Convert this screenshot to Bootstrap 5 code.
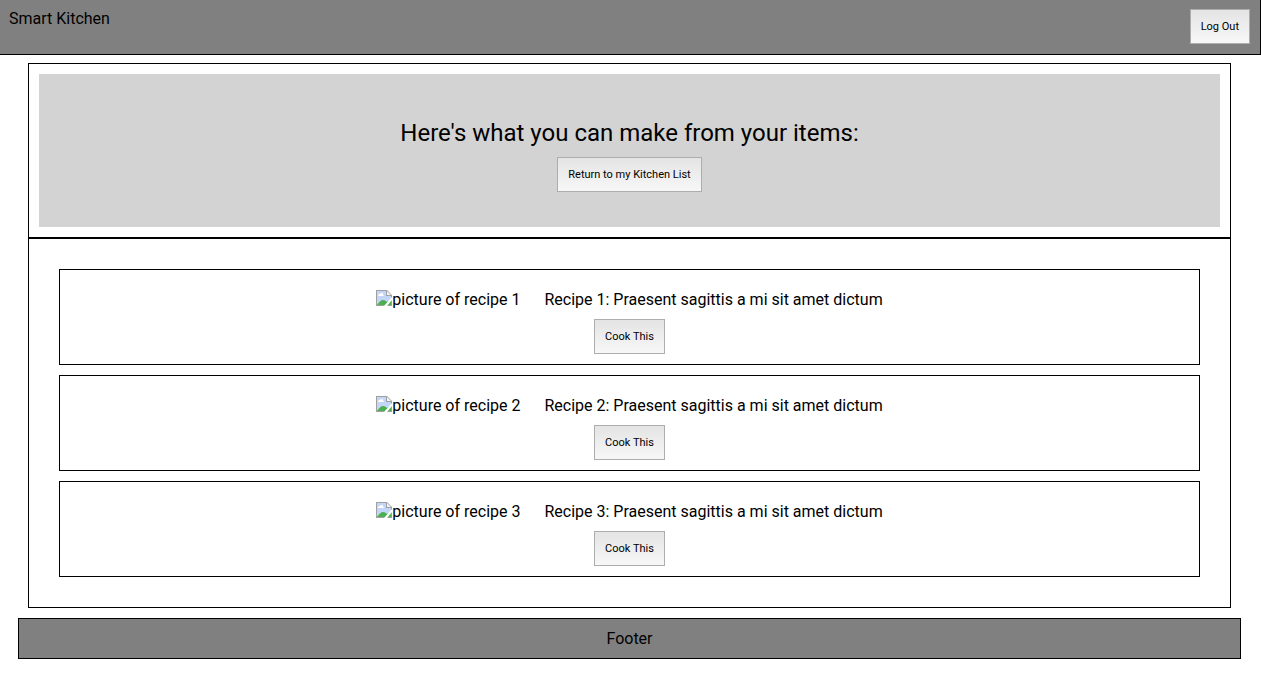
<!DOCTYPE html>
<html lang="en">
<head>
<meta charset="utf-8">
<meta name="viewport" content="width=device-width, initial-scale=1">
<title>Smart Kitchen</title>
<link href="https://cdn.jsdelivr.net/npm/bootstrap@5.3.0/dist/css/bootstrap.min.css" rel="stylesheet">
<style>
  body { font-family: Roboto, sans-serif; font-size: 16px; line-height: 19px; color: #000; background: #fff; }
  .site-header { background: #808080; border: solid #000; border-width: 0 1px 1px 0; padding: 9px 10px 10px 9px; }
  .kitchen-btn { font-size: 11px; line-height: 13px; padding: 10px; color: #000; border: 1px solid #adadad; border-radius: 0; background: linear-gradient(#e4e4e4, #f7f7f7); }
  .kitchen-btn:hover { color: #000; border-color: #777; }
  main { margin: 8px 30px 10px 28px; }
  .panel { border: 1px solid #000; }
  .intro { padding: 10px; }
  .intro-box { background: #d3d3d3; padding: 45px 20px 35px; }
  .intro-box h1 { font-size: 24px; line-height: 28px; font-weight: 400; margin: 0 0 10px; color: #000; }
  .recipes { padding: 30px; gap: 10px; }
  .recipe { padding: 20px 10px 10px; }
  .recipe-line { gap: 24px; margin-bottom: 10px; }
  .recipe h2 { font-size: 16px; line-height: 19px; font-weight: 400; margin: 0; color: #000; }
  .site-footer { background: #808080; padding: 10px; margin: 0 20px 14px 18px; }
</style>
</head>
<body>
<svg class="d-none" aria-hidden="true">
  <symbol id="missing-image" viewBox="0 0 16 16">
    <path d="M0 0h11l5 5v11H0z" fill="#a0a0a0"/>
    <path d="M1 1h9v5h5v9H1z" fill="#fff"/>
    <path d="M1 1h9v5h5v9H1z" fill="#c3d6f7"/>
    <path d="M11 1l4 4h-4z" fill="#f4f4f4"/>
    <path d="M2 6c0-2 2-2 2-2 1-2 4-1 3 1 1 0 1 1 1 1z" fill="#fff"/>
    <path d="M1 15c2-3 4-5 6-5s3 1 4 2l4-2v5z" fill="#4caf50"/>
    <path d="M16 7v3l-5 6H8z" fill="#fff"/>
  </symbol>
</svg>

<header class="site-header d-flex justify-content-between align-items-start">
  <span>Smart Kitchen</span>
  <button type="button" class="btn kitchen-btn">Log Out</button>
</header>

<main>
  <section class="panel intro">
    <div class="intro-box text-center">
      <h1>Here's what you can make from your items:</h1>
      <button type="button" class="btn kitchen-btn">Return to my Kitchen List</button>
    </div>
  </section>
  <section class="panel recipes d-flex flex-column">
    <article class="panel recipe text-center">
      <div class="recipe-line d-flex justify-content-center">
        <span class="d-flex"><svg width="16" height="16" aria-hidden="true"><use href="#missing-image"/></svg>picture of recipe 1</span>
        <h2>Recipe 1: Praesent sagittis a mi sit amet dictum</h2>
      </div>
      <button type="button" class="btn kitchen-btn">Cook This</button>
    </article>
    <article class="panel recipe text-center">
      <div class="recipe-line d-flex justify-content-center">
        <span class="d-flex"><svg width="16" height="16" aria-hidden="true"><use href="#missing-image"/></svg>picture of recipe 2</span>
        <h2>Recipe 2: Praesent sagittis a mi sit amet dictum</h2>
      </div>
      <button type="button" class="btn kitchen-btn">Cook This</button>
    </article>
    <article class="panel recipe text-center">
      <div class="recipe-line d-flex justify-content-center">
        <span class="d-flex"><svg width="16" height="16" aria-hidden="true"><use href="#missing-image"/></svg>picture of recipe 3</span>
        <h2>Recipe 3: Praesent sagittis a mi sit amet dictum</h2>
      </div>
      <button type="button" class="btn kitchen-btn">Cook This</button>
    </article>
  </section>
</main>

<footer class="site-footer panel text-center">Footer</footer>
<script src="https://cdn.jsdelivr.net/npm/bootstrap@5.3.0/dist/js/bootstrap.bundle.min.js"></script>
</body>
</html>
